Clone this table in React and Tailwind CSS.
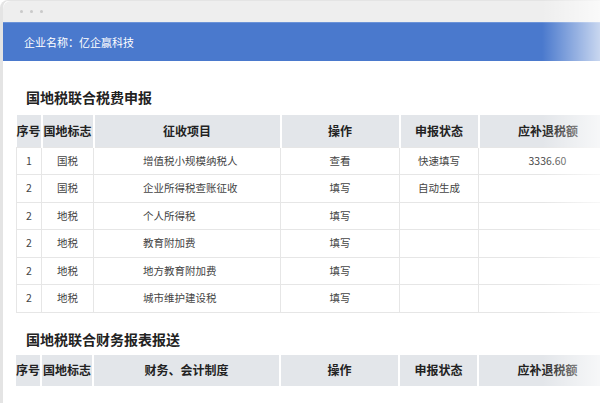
import React from 'react';

const rows1 = [
  { no: '1', tag: '国税', item: '增值税小规模纳税人', op: '查看', status: '快速填写', amount: '3336.60' },
  { no: '2', tag: '国税', item: '企业所得税查账征收', op: '填写', status: '自动生成', amount: '' },
  { no: '2', tag: '地税', item: '个人所得税', op: '填写', status: '', amount: '' },
  { no: '2', tag: '地税', item: '教育附加费', op: '填写', status: '', amount: '' },
  { no: '2', tag: '地税', item: '地方教育附加费', op: '填写', status: '', amount: '' },
  { no: '2', tag: '地税', item: '城市维护建设税', op: '填写', status: '', amount: '' },
];

const Cols = () => (
  <colgroup>
    <col className="w-[25px]" />
    <col className="w-[52px]" />
    <col className="w-[187px]" />
    <col className="w-[119px]" />
    <col className="w-[79px]" />
    <col className="w-[138px]" />
  </colgroup>
);

const Head = ({ third, h }) => (
  <thead>
    <tr className={`${h} bg-[#e3e6ea] text-[12px] font-bold text-[#222]`}>
      <th className="border-r-2 border-white font-bold">序号</th>
      <th className="border-r-2 border-white font-bold">国地标志</th>
      <th className="border-r-2 border-white font-bold">{third}</th>
      <th className="border-r-2 border-white font-bold">操作</th>
      <th className="border-r-2 border-white font-bold">申报状态</th>
      <th className="font-bold">应补退税额</th>
    </tr>
  </thead>
);

export default function App() {
  return (
    <div className="relative w-[600px] h-[403px] overflow-hidden bg-white" style={{ fontFamily: '"Noto Sans CJK SC", "Noto Sans", sans-serif' }}>
      <div className="h-full flex flex-col border-l-[3px] border-t border-[#e4e4e4] rounded-tl-lg">
        {/* window bar */}
        <div className="h-[21px] bg-[#eeeeee] flex items-center gap-[7px] pl-[17px] rounded-tl-lg">
          <span className="w-[3px] h-[3px] rounded-full bg-[#c9c9c9]" />
          <span className="w-[3px] h-[3px] rounded-full bg-[#c9c9c9]" />
          <span className="w-[3px] h-[3px] rounded-full bg-[#c9c9c9]" />
        </div>

        {/* blue header */}
        <div className="h-[39px] bg-[#4a79cd] border-t border-[#6b93d8] flex items-center pl-[21px] text-white text-[11px]">
          企业名称：亿企赢科技
        </div>

        {/* content */}
        <div className="pl-[13px]">
          <h2 className="mt-[26px] ml-[10px] text-[14px] font-bold text-[#222] leading-[20px]">国地税联合税费申报</h2>
          <table className="mt-[8px] w-[600px] table-fixed border-collapse text-center">
            <Cols />
            <Head third="征收项目" h="h-[32px]" />
            <tbody className="text-[10.5px] text-[#444]">
              {rows1.map((r, i) => (
                <tr key={i} className="h-[27.5px]">
                  <td className="border border-[#e6e6e6]">{r.no}</td>
                  <td className="border border-[#e6e6e6]">{r.tag}</td>
                  <td className="border border-[#e6e6e6] text-left pl-[49px]">{r.item}</td>
                  <td className="border border-[#e6e6e6]">{r.op}</td>
                  <td className="border border-[#e6e6e6]">{r.status}</td>
                  <td className="border border-[#e6e6e6]">{r.amount}</td>
                </tr>
              ))}
            </tbody>
          </table>

          <h2 className="mt-[16px] ml-[10px] text-[14px] font-bold text-[#222] leading-[20px]">国地税联合财务报表报送</h2>
          <table className="mt-[6px] w-[600px] table-fixed border-collapse text-center">
            <Cols />
            <Head third="财务、会计制度" h="h-[31px]" />
          </table>
        </div>
      </div>

      {/* right fade */}
      <div className="absolute right-0 top-0 h-full w-[58px] bg-gradient-to-l from-white/70 to-transparent pointer-events-none" />
    </div>
  );
}
